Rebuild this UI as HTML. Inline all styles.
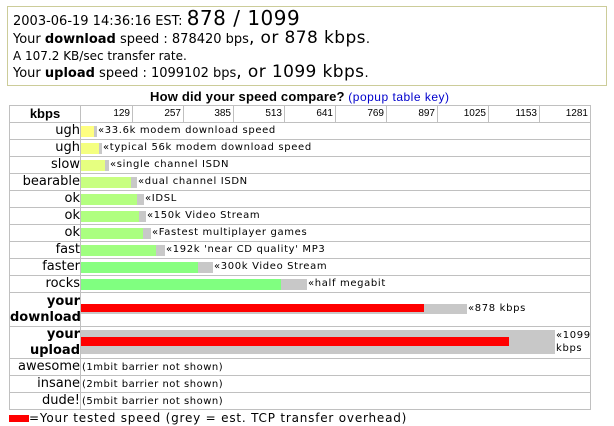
<!DOCTYPE html>
<html><head><meta charset="utf-8"><style>
*{margin:0;padding:0;box-sizing:border-box}
body{width:614px;height:424px;overflow:hidden;background:#fff;font-family:"DejaVu Sans","Liberation Sans",sans-serif;color:#000;position:relative}
.a{position:absolute;white-space:nowrap}
#box{left:7px;top:6px;width:600px;height:80px;border:1px solid #cccc99}
.l{position:absolute;left:10px;width:70px;text-align:right;font-size:13px;line-height:17px}
.hl{position:absolute;left:0;width:591px;height:1px;background:#c0c0c0}
.vl{position:absolute;width:1px;background:#c0c0c0}
.bar{position:absolute;left:81px;height:11px}
.t{position:absolute;font-size:10px;line-height:12px;letter-spacing:0.65px;white-space:nowrap}
.n{position:absolute;top:106px;font-family:"Liberation Sans",sans-serif;font-size:10px;line-height:15px;text-align:right;width:48px}
.big{font-size:17px}
</style></head><body>
<div class="a" id="box"></div>
<div class="a" style="left:13px;top:8px;font-size:13px;line-height:20px">2003-06-19 14:36:16 EST: <span style="font-size:20px;letter-spacing:0.5px">878 / 1099</span></div>
<div class="a" style="left:13px;top:29px;font-size:13px;line-height:18px">Your <b>download</b> speed : 878420 bps<span class="big" style="letter-spacing:0.4px">, or 878 kbps</span>.</div>
<div class="a" style="left:13px;top:48px;font-size:12px;line-height:16px">A 107.2 KB/sec transfer rate.</div>
<div class="a" style="left:13px;top:63px;font-size:13px;line-height:18px">Your <b>upload</b> speed : 1099102 bps<span class="big" style="letter-spacing:0.4px">, or 1099 kbps</span>.</div>
<div class="a" style="left:150px;top:89px;font-family:'Liberation Sans',sans-serif;font-size:13px;line-height:15px"><b style="letter-spacing:0.2px">How did your speed compare?</b> <span style="color:#0000cc;font-size:12px;letter-spacing:0.5px">(popup table key)</span></div>

<!-- grid -->
<div class="hl" style="left:9px;top:105px;width:582px"></div>
<div class="hl" style="left:9px;top:122px;width:582px"></div>
<div class="hl" style="left:9px;top:139px;width:582px"></div>
<div class="hl" style="left:9px;top:156px;width:582px"></div>
<div class="hl" style="left:9px;top:173px;width:582px"></div>
<div class="hl" style="left:9px;top:190px;width:582px"></div>
<div class="hl" style="left:9px;top:207px;width:582px"></div>
<div class="hl" style="left:9px;top:224px;width:582px"></div>
<div class="hl" style="left:9px;top:241px;width:582px"></div>
<div class="hl" style="left:9px;top:258px;width:582px"></div>
<div class="hl" style="left:9px;top:275px;width:582px"></div>
<div class="hl" style="left:9px;top:292px;width:582px"></div>
<div class="hl" style="left:9px;top:326px;width:582px"></div>
<div class="hl" style="left:9px;top:358px;width:582px"></div>
<div class="hl" style="left:9px;top:375px;width:582px"></div>
<div class="hl" style="left:9px;top:392px;width:582px"></div>
<div class="hl" style="left:9px;top:409px;width:582px"></div>
<div class="vl" style="left:9px;top:105px;height:305px"></div>
<div class="vl" style="left:80px;top:105px;height:305px"></div>
<div class="vl" style="left:590px;top:105px;height:305px"></div>
<div class="vl" style="left:132px;top:105px;height:17px"></div>
<div class="vl" style="left:183px;top:105px;height:17px"></div>
<div class="vl" style="left:233px;top:105px;height:17px"></div>
<div class="vl" style="left:284px;top:105px;height:17px"></div>
<div class="vl" style="left:335px;top:105px;height:17px"></div>
<div class="vl" style="left:386px;top:105px;height:17px"></div>
<div class="vl" style="left:437px;top:105px;height:17px"></div>
<div class="vl" style="left:488px;top:105px;height:17px"></div>
<div class="vl" style="left:539px;top:105px;height:17px"></div>

<div class="a" style="left:10px;top:105px;width:70px;text-align:center;font-family:'Liberation Sans',sans-serif;font-weight:bold;font-size:13px;line-height:17px">kbps</div>
<div class="n" style="left:82px">129</div>
<div class="n" style="left:133px">257</div>
<div class="n" style="left:183px">385</div>
<div class="n" style="left:234px">513</div>
<div class="n" style="left:285px">641</div>
<div class="n" style="left:336px">769</div>
<div class="n" style="left:387px">897</div>
<div class="n" style="left:438px">1025</div>
<div class="n" style="left:489px">1153</div>
<div class="n" style="left:540px">1281</div>

<div class="l" style="top:122px">ugh</div>
<div class="l" style="top:139px">ugh</div>
<div class="l" style="top:156px">slow</div>
<div class="l" style="top:173px">bearable</div>
<div class="l" style="top:190px">ok</div>
<div class="l" style="top:207px">ok</div>
<div class="l" style="top:224px">ok</div>
<div class="l" style="top:241px">fast</div>
<div class="l" style="top:258px">faster</div>
<div class="l" style="top:275px">rocks</div>
<div class="l" style="top:358px">awesome</div>
<div class="l" style="top:375px">insane</div>
<div class="l" style="top:392px">dude!</div>
<div class="a" style="left:10px;top:294px;width:70px;text-align:right;font-weight:bold;font-size:13px;line-height:16px">your<br>download</div>
<div class="a" style="left:10px;top:327px;width:70px;text-align:right;font-weight:bold;font-size:13px;line-height:16px">your<br>upload</div>

<!-- bars -->
<div class="bar" style="top:126px;width:16px;background:#c8c8c8"></div><div class="bar" style="top:126px;width:13px;background:#ffff80"></div><div class="t" style="left:98px;top:125px">«33.6k modem download speed</div>
<div class="bar" style="top:143px;width:21px;background:#c8c8c8"></div><div class="bar" style="top:143px;width:18px;background:#f4ff80"></div><div class="t" style="left:103px;top:142px">«typical 56k modem download speed</div>
<div class="bar" style="top:160px;width:28px;background:#c8c8c8"></div><div class="bar" style="top:160px;width:24px;background:#e6ff80"></div><div class="t" style="left:110px;top:159px">«single channel ISDN</div>
<div class="bar" style="top:177px;width:56px;background:#c8c8c8"></div><div class="bar" style="top:177px;width:50px;background:#c8ff80"></div><div class="t" style="left:138px;top:176px">«dual channel ISDN</div>
<div class="bar" style="top:194px;width:63px;background:#c8c8c8"></div><div class="bar" style="top:194px;width:56px;background:#b4ff80"></div><div class="t" style="left:145px;top:193px">«IDSL</div>
<div class="bar" style="top:211px;width:65px;background:#c8c8c8"></div><div class="bar" style="top:211px;width:58px;background:#b0ff80"></div><div class="t" style="left:147px;top:210px">«150k Video Stream</div>
<div class="bar" style="top:228px;width:70px;background:#c8c8c8"></div><div class="bar" style="top:228px;width:62px;background:#aaff80"></div><div class="t" style="left:152px;top:227px">«Fastest multiplayer games</div>
<div class="bar" style="top:245px;width:84px;background:#c8c8c8"></div><div class="bar" style="top:245px;width:75px;background:#a0ff80"></div><div class="t" style="left:166px;top:244px">«192k 'near CD quality' MP3</div>
<div class="bar" style="top:262px;width:132px;background:#c8c8c8"></div><div class="bar" style="top:262px;width:117px;background:#88ff80"></div><div class="t" style="left:214px;top:261px">«300k Video Stream</div>
<div class="bar" style="top:279px;width:226px;background:#c8c8c8"></div><div class="bar" style="top:279px;width:200px;background:#80ff80"></div><div class="t" style="left:308px;top:278px">«half megabit</div>
<div class="bar" style="top:304px;width:386px;height:10px;background:#c8c8c8"></div><div class="bar" style="top:304px;width:343px;height:8px;background:#ff0000"></div><div class="t" style="left:468px;top:303px">«878 kbps</div>
<div class="bar" style="top:330px;width:474px;height:24px;background:#c8c8c8"></div><div class="bar" style="top:337px;width:428px;height:9px;background:#ff0000"></div><div class="t" style="left:556px;top:329px;line-height:13px">«1099<br>kbps</div>
<div class="t" style="left:82px;top:362px;letter-spacing:0.5px">(1mbit barrier not shown)</div>
<div class="t" style="left:82px;top:379px;letter-spacing:0.5px">(2mbit barrier not shown)</div>
<div class="t" style="left:82px;top:396px;letter-spacing:0.5px">(5mbit barrier not shown)</div>

<div class="a" style="left:9px;top:415px;width:20px;height:7px;background:#ff0000"></div>
<div class="a" style="left:29px;top:410px;font-size:12px;line-height:16px;letter-spacing:0.8px">=Your tested speed (grey = est. TCP transfer overhead)</div>
</body></html>
